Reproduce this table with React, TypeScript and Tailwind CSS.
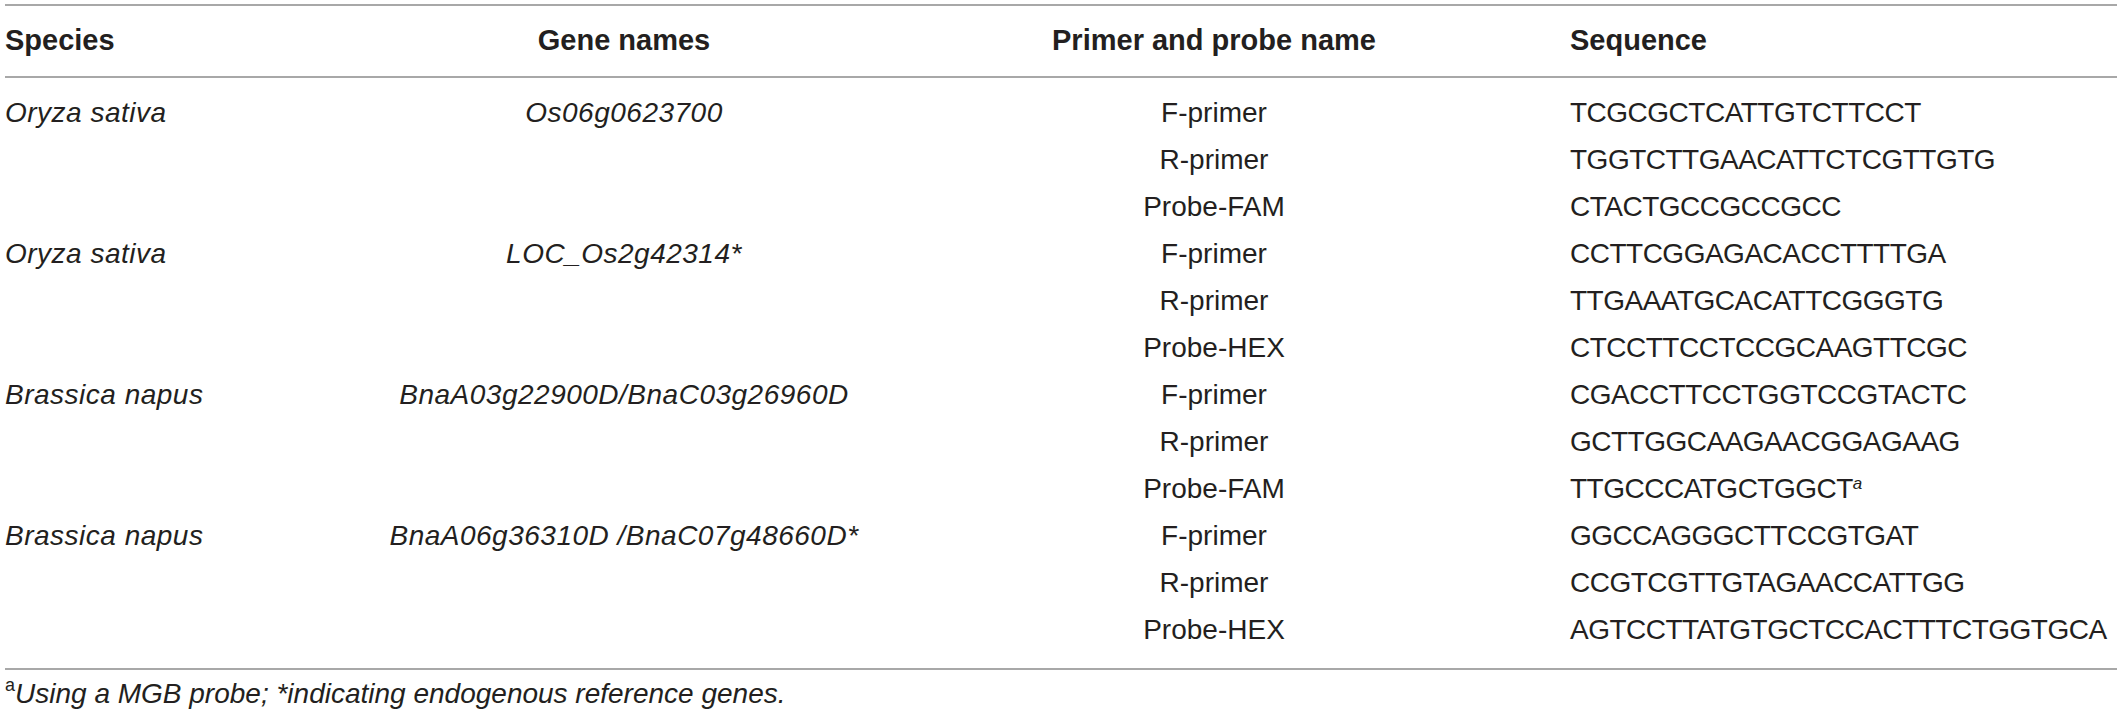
const rows = [
  { species: "Oryza sativa", gene: "Os06g0623700", primer: "F-primer", seq: "TCGCGCTCATTGTCTTCCT" },
  { primer: "R-primer", seq: "TGGTCTTGAACATTCTCGTTGTG" },
  { primer: "Probe-FAM", seq: "CTACTGCCGCCGCC" },
  { species: "Oryza sativa", gene: "LOC_Os2g42314*", primer: "F-primer", seq: "CCTTCGGAGACACCTTTTGA" },
  { primer: "R-primer", seq: "TTGAAATGCACATTCGGGTG" },
  { primer: "Probe-HEX", seq: "CTCCTTCCTCCGCAAGTTCGC" },
  { species: "Brassica napus", gene: "BnaA03g22900D/BnaC03g26960D", primer: "F-primer", seq: "CGACCTTCCTGGTCCGTACTC" },
  { primer: "R-primer", seq: "GCTTGGCAAGAACGGAGAAG" },
  { primer: "Probe-FAM", seq: "TTGCCCATGCTGGCT", note: "a" },
  { species: "Brassica napus", gene: "BnaA06g36310D /BnaC07g48660D*", primer: "F-primer", seq: "GGCCAGGGCTTCCGTGAT" },
  { primer: "R-primer", seq: "CCGTCGTTGTAGAACCATTGG" },
  { primer: "Probe-HEX", seq: "AGTCCTTATGTGCTCCACTTTCTGGTGCA" },
];

export default function App() {
  return (
    <div className="w-[2117px] h-[718px] overflow-hidden bg-white pl-[5px] pt-[4px] font-['Liberation_Sans',Arial,sans-serif] text-[#231f20]">
      <div className="h-[2px] bg-[#a8a8a8]" />

      {/* header */}
      <div className="grid h-[70px] grid-cols-[376px_486px_694px_1fr] items-center text-[29px] font-bold">
        <div>Species</div>
        <div className="text-center">Gene names</div>
        <div className="text-center">Primer and probe name</div>
        <div className="pl-[9px]">Sequence</div>
      </div>
      <div className="h-[2px] bg-[#a8a8a8]" />

      {/* body */}
      <div className="pt-[11px] pb-[15px]">
        {rows.map((r, i) => (
          <div key={i} className="grid h-[47px] grid-cols-[376px_486px_694px_1fr] items-center text-[28px] whitespace-nowrap">
            <div className="italic tracking-[0.5px]">{r.species}</div>
            <div className="text-center italic tracking-[0.5px]">{r.gene}</div>
            <div className="text-center">{r.primer}</div>
            <div className="pl-[9px] tracking-[-0.5px]">
              {r.seq}
              {r.note && <sup className="text-[17px] italic">{r.note}</sup>}
            </div>
          </div>
        ))}
      </div>
      <div className="h-[2px] bg-[#a8a8a8]" />

      {/* footnote */}
      <div className="flex h-[48px] items-center text-[28px] whitespace-nowrap">
        <sup className="text-[18px]">a</sup>
        <span className="italic">Using a MGB probe; *indicating endogenous reference genes.</span>
      </div>
    </div>
  );
}
